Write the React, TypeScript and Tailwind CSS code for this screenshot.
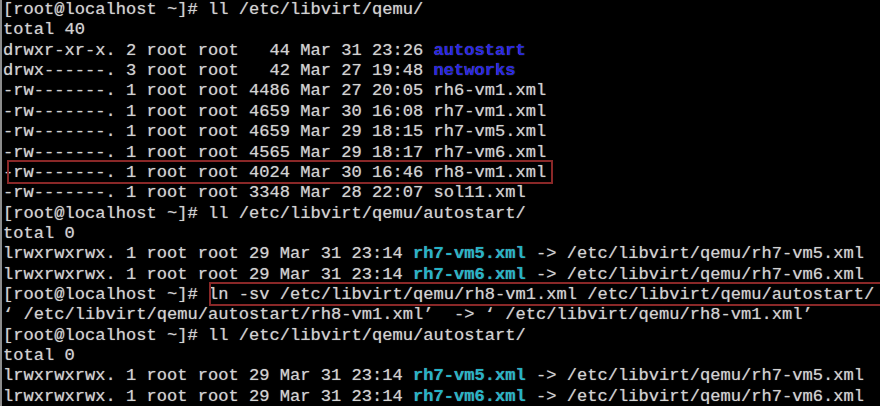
import React from "react";

const W = "text-[#d2d2d2]";

function Blue({ children }: { children: React.ReactNode }) {
  return <span className="text-[#2424e6] font-bold">{children}</span>;
}
function Cyan({ children }: { children: React.ReactNode }) {
  return <span className="text-[#22b4c8] font-bold">{children}</span>;
}

function Row({ children }: { children?: React.ReactNode }) {
  return <div className="h-[20.37px] whitespace-pre">{children}</div>;
}

export default function App() {
  return (
    <div className="w-[880px] h-[406px] bg-black overflow-hidden border-l-2 border-[#8c8c8c]">
      <div
        className={`${W} text-[17.08px] leading-[20.37px] pl-px [text-shadow:0_0_1px_rgba(210,210,210,0.6)]`}
        style={{ fontFamily: '"Liberation Mono", "Courier New", monospace' }}
      >
        <Row>[root@localhost ~]# ll /etc/libvirt/qemu/</Row>
        <Row>total 40</Row>
        <Row>
          drwxr-xr-x. 2 root root   44 Mar 31 23:26 <Blue>autostart</Blue>
        </Row>
        <Row>
          drwx------. 3 root root   42 Mar 27 19:48 <Blue>networks</Blue>
        </Row>
        <Row>-rw-------. 1 root root 4486 Mar 27 20:05 rh6-vm1.xml</Row>
        <Row>-rw-------. 1 root root 4659 Mar 30 16:08 rh7-vm1.xml</Row>
        <Row>-rw-------. 1 root root 4659 Mar 29 18:15 rh7-vm5.xml</Row>
        <Row>-rw-------. 1 root root 4565 Mar 29 18:17 rh7-vm6.xml</Row>
        <Row>
          <span className="relative">
            -rw-------. 1 root root 4024 Mar 30 16:46 rh8-vm1.xml
            <span className="absolute left-[4px] right-[-7px] top-[-3px] bottom-[-2px] border-2 border-[#8a2828] pointer-events-none" />
          </span>
        </Row>
        <Row>-rw-------. 1 root root 3348 Mar 28 22:07 sol11.xml</Row>
        <Row>[root@localhost ~]# ll /etc/libvirt/qemu/autostart/</Row>
        <Row>total 0</Row>
        <Row>
          lrwxrwxrwx. 1 root root 29 Mar 31 23:14 <Cyan>rh7-vm5.xml</Cyan> -&gt; /etc/libvirt/qemu/rh7-vm5.xml
        </Row>
        <Row>
          lrwxrwxrwx. 1 root root 29 Mar 31 23:14 <Cyan>rh7-vm6.xml</Cyan> -&gt; /etc/libvirt/qemu/rh7-vm6.xml
        </Row>
        <Row>
          [root@localhost ~]#{" "}
          <span className="relative">
            ln -sv /etc/libvirt/qemu/rh8-vm1.xml /etc/libvirt/qemu/autostart/
            <span className="absolute left-[1px] right-[-80px] top-[-3px] bottom-[-2px] border-2 border-[#8a2828] pointer-events-none" />
          </span>
        </Row>
        <Row>‘ /etc/libvirt/qemu/autostart/rh8-vm1.xml’  -&gt; ‘ /etc/libvirt/qemu/rh8-vm1.xml’</Row>
        <Row>[root@localhost ~]# ll /etc/libvirt/qemu/autostart/</Row>
        <Row>total 0</Row>
        <Row>
          lrwxrwxrwx. 1 root root 29 Mar 31 23:14 <Cyan>rh7-vm5.xml</Cyan> -&gt; /etc/libvirt/qemu/rh7-vm5.xml
        </Row>
        <Row>
          lrwxrwxrwx. 1 root root 29 Mar 31 23:14 <Cyan>rh7-vm6.xml</Cyan> -&gt; /etc/libvirt/qemu/rh7-vm6.xml
        </Row>
      </div>
    </div>
  );
}
